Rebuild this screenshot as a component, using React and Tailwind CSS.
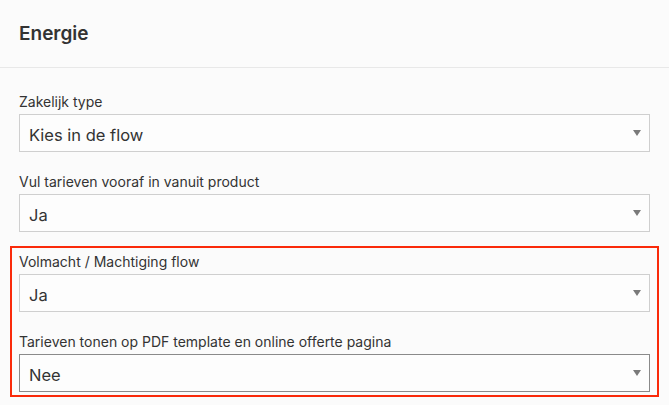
function Field({ label, value, focused }) {
  return (
    <div className="flex flex-col">
      <label className="text-[14px] leading-[20px] text-[#333] mb-[2px]">{label}</label>
      <div
        className={
          'relative h-[38px] flex items-center pl-[9px] pr-8 pt-[3px] bg-[#fdfdfd] border ' +
          (focused ? 'border-[#8a8a8a]' : 'border-[#cfcfcf]')
        }
      >
        <span className="text-[16.5px] leading-[20px] text-[#333]">{value}</span>
        <span className="absolute right-[8px] top-1/2 -translate-y-1/2 w-0 h-0 border-l-[4px] border-r-[4px] border-t-[6px] border-l-transparent border-r-transparent border-t-[#7a7a7a]" />
      </div>
    </div>
  );
}

export default function App() {
  return (
    <div
      className="w-[669px] h-[405px] bg-[#fbfbfb] overflow-hidden"
      style={{ fontFamily: 'Inter, "Noto Sans", sans-serif' }}
    >
      <div className="h-[68px] flex items-center px-[19px] pt-[1px] border-b border-[#e8e8e8]">
        <h2 className="text-[19px] font-semibold text-[#333]">Energie</h2>
      </div>
      <div className="pt-[24px] pl-[19px] pr-[19px] flex flex-col">
        <Field label="Zakelijk type" value="Kies in de flow" />
        <div className="h-[20px]" />
        <Field label="Vul tarieven vooraf in vanuit product" value="Ja" />
        <div className="mt-[14px] -mx-[9px] px-[7px] pt-[4px] pb-[3px] border-2 border-[#fa2a0a] flex flex-col gap-[20px]">
          <Field label="Volmacht / Machtiging flow" value="Ja" />
          <Field label="Tarieven tonen op PDF template en online offerte pagina" value="Nee" focused />
        </div>
      </div>
    </div>
  );
}
